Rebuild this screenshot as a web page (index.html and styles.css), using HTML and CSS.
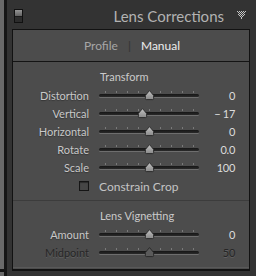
FILE: index.html
```html
<!DOCTYPE html>
<html lang="en">

<head>
    <meta charset="UTF-8">
    <meta name="viewport" content="width=device-width, initial-scale=1.0">
    <title>Lens Corrections</title>
    <link rel="stylesheet" href="styles.css">
</head>

<body>
    <div class="rail"></div>
    <div class="rail-edge"></div>

    <div class="column">
        <header class="panel-head">
            <svg class="toggle" width="9" height="14" viewBox="0 0 9 14">
                <defs>
                    <linearGradient id="toggleTop" x1="0" y1="0" x2="0" y2="1">
                        <stop offset="0" stop-color="#959595" />
                        <stop offset="1" stop-color="#626262" />
                    </linearGradient>
                </defs>
                <rect x="0.5" y="0.5" width="8" height="13" fill="#2c2c2c" stroke="#111" />
                <rect x="1" y="1" width="7" height="6" fill="url(#toggleTop)" />
                <rect x="1" y="7" width="7" height="1" fill="#1a1a1a" />
            </svg>
            <h1 class="panel-title">Lens Corrections</h1>
            <svg class="collapse" width="9" height="8" viewBox="0 0 9 8">
                <g fill="#c4c4c4">
                    <rect x="0" y="0" width="1" height="1" /><rect x="2" y="0" width="1" height="1" />
                    <rect x="4" y="0" width="1" height="1" /><rect x="6" y="0" width="1" height="1" />
                    <rect x="8" y="0" width="1" height="1" />
                    <rect x="1" y="1" width="1" height="1" /><rect x="3" y="1" width="1" height="1" />
                    <rect x="5" y="1" width="1" height="1" /><rect x="7" y="1" width="1" height="1" />
                    <rect x="2" y="2" width="1" height="1" /><rect x="4" y="2" width="1" height="1" />
                    <rect x="6" y="2" width="1" height="1" />
                    <rect x="1" y="3" width="1" height="1" /><rect x="3" y="3" width="1" height="1" />
                    <rect x="5" y="3" width="1" height="1" /><rect x="7" y="3" width="1" height="1" />
                    <rect x="2" y="4" width="1" height="1" /><rect x="4" y="4" width="1" height="1" />
                    <rect x="6" y="4" width="1" height="1" />
                    <rect x="3" y="5" width="1" height="1" /><rect x="5" y="5" width="1" height="1" />
                    <rect x="4" y="6" width="1" height="1" />
                    <rect x="4" y="7" width="1" height="1" />
                </g>
            </svg>
        </header>

        <main class="panel">
            <nav class="tabs">
                <span class="tab">Profile</span>
                <span class="tab-sep">|</span>
                <span class="tab is-active">Manual</span>
            </nav>

            <section class="section">
                <h2 class="section-title">Transform</h2>

                <div class="row">
                    <span class="label">Distortion</span>
                    <div class="slider"><div class="track"></div><div class="thumb" style="left: 45px"></div></div>
                    <span class="value">0</span>
                </div>
                <div class="row">
                    <span class="label">Vertical</span>
                    <div class="slider"><div class="track"></div><div class="thumb" style="left: 38px"></div></div>
                    <span class="value">− 17</span>
                </div>
                <div class="row">
                    <span class="label">Horizontal</span>
                    <div class="slider"><div class="track"></div><div class="thumb" style="left: 45px"></div></div>
                    <span class="value">0</span>
                </div>
                <div class="row">
                    <span class="label">Rotate</span>
                    <div class="slider"><div class="track"></div><div class="thumb" style="left: 45px"></div></div>
                    <span class="value">0.0</span>
                </div>
                <div class="row">
                    <span class="label">Scale</span>
                    <div class="slider"><div class="track"></div><div class="thumb" style="left: 45px"></div></div>
                    <span class="value">100</span>
                </div>

                <label class="check-row">
                    <span class="check-cell"><span class="checkbox"></span></span>
                    <span class="check-text">Constrain Crop</span>
                </label>
            </section>

            <section class="section section-vignette">
                <h2 class="section-title">Lens Vignetting</h2>

                <div class="row">
                    <span class="label">Amount</span>
                    <div class="slider"><div class="track"></div><div class="thumb" style="left: 45px"></div></div>
                    <span class="value">0</span>
                </div>
                <div class="row is-disabled">
                    <span class="label">Midpoint</span>
                    <div class="slider"><div class="track"></div><div class="thumb" style="left: 45px"></div></div>
                    <span class="value">50</span>
                </div>
            </section>
        </main>
    </div>
</body>

</html>
```

FILE: styles.css
```css
/* Reset and Base Styling */
* {
    margin: 0;
    padding: 0;
    box-sizing: border-box;
}

body {
    font-family: Lato, "DejaVu Sans", sans-serif;
    background-color: #333;
    color: #c6c6c6;
    width: 256px;
    height: 276px;
    overflow: hidden;
    display: flex;
}

/* left edge of the neighbouring pane */
.rail {
    width: 4px;
    background: linear-gradient(#6a6a6a 0 269px, #151515 269px 272px, #6a6a6a 272px);
}

.rail-edge {
    width: 3px;
    background: #161616;
}

.column {
    flex: 1;
    display: flex;
    flex-direction: column;
}

/* Panel header */
.panel-head {
    height: 29px;
    display: flex;
    align-items: center;
    padding: 3px 10px 0 7px;
}

.toggle {
    display: block;
}

.panel-title {
    margin-left: auto;
    font-size: 15px;
    font-weight: normal;
    color: #b2b2b2;
}

.collapse {
    display: block;
    margin-left: 13px;
    margin-top: -2px;
}

/* Panel body */
.panel {
    width: 238px;
    margin-left: 5px;
    background: #4c4c4c;
    border: 1px solid #121212;
    border-bottom-width: 2px;
    padding-bottom: 1px;
}

.tabs {
    height: 32px;
    display: flex;
    justify-content: center;
    align-items: center;
    gap: 10px;
    font-size: 12px;
    border-bottom: 1px solid #141414;
    padding-left: 2px;
}

.tab {
    color: #a6a6a6;
}

.tab.is-active {
    color: #ececec;
}

.tab-sep {
    color: #333;
}

.section {
    padding: 6px 0 4px;
}

.section-vignette {
    padding: 6px 0;
    border-top: 1px solid #3c3c3c;
    border-bottom: 1px solid #595959;
}

.section-title {
    height: 18px;
    line-height: 18px;
    padding-left: 87px;
    font-size: 11px;
    font-weight: normal;
    color: #cacaca;
}

.row {
    display: grid;
    grid-template-columns: 86px 100px 36px;
    height: 18px;
    align-items: center;
    font-size: 11px;
}

.label {
    text-align: right;
    padding-right: 10px;
    color: #c8c8c8;
    text-shadow: 0 1px 1px rgba(0, 0, 0, 0.3);
}

.value {
    text-align: right;
    color: #dcdcdc;
    letter-spacing: -0.3px;
}

.slider {
    position: relative;
    height: 18px;
}

/* tick marks above the groove */
.slider::before {
    content: "";
    position: absolute;
    left: 6px;
    top: 5px;
    width: 89px;
    height: 2px;
    background: repeating-linear-gradient(to right, #7a7a7a 0 1px, transparent 1px 11px);
}

.track {
    position: absolute;
    left: 0;
    right: 0;
    top: 8px;
    height: 3px;
    border-radius: 2px;
    background: linear-gradient(#161616, #2a2a2a);
    box-shadow: 0 1px 0 #6e6e6e;
}

.thumb {
    position: absolute;
    top: 4px;
    width: 11px;
    height: 11px;
    background: url("data:image/svg+xml,%3Csvg xmlns='http://www.w3.org/2000/svg' width='11' height='11' viewBox='0 0 11 11'%3E%3Cdefs%3E%3ClinearGradient id='g' x1='0' y1='0' x2='0' y2='1'%3E%3Cstop offset='0' stop-color='%23c4c4c4'/%3E%3Cstop offset='1' stop-color='%23888'/%3E%3C/linearGradient%3E%3C/defs%3E%3Cpath d='M5.5 0.6 L9.6 5.4 L9.6 8.6 Q9.6 9.6 8.6 9.6 L2.4 9.6 Q1.4 9.6 1.4 8.6 L1.4 5.4 Z' fill='url(%23g)' stroke='%23262626' stroke-width='0.9'/%3E%3C/svg%3E") no-repeat;
}

.row.is-disabled .label,
.row.is-disabled .value {
    color: #262626;
    text-shadow: 0 1px 0 rgba(255, 255, 255, 0.12);
}

.row.is-disabled .thumb {
    background: url("data:image/svg+xml,%3Csvg xmlns='http://www.w3.org/2000/svg' width='11' height='11' viewBox='0 0 11 11'%3E%3Cpath d='M5.5 0.6 L9.6 5.4 L9.6 8.6 Q9.6 9.6 8.6 9.6 L2.4 9.6 Q1.4 9.6 1.4 8.6 L1.4 5.4 Z' fill='%235a5a5a' stroke='%23262626' stroke-width='0.9'/%3E%3C/svg%3E") no-repeat;
}

.check-row {
    display: grid;
    grid-template-columns: 86px 150px;
    height: 20px;
    align-items: center;
    font-size: 11px;
}

.check-cell {
    display: flex;
    justify-content: flex-end;
    padding-right: 10px;
}

.checkbox {
    width: 10px;
    height: 10px;
    border: 1px solid #151515;
    background: #464646;
    box-shadow: inset 0 1px 1px rgba(0, 0, 0, 0.4);
}

.check-text {
    color: #c4c4c4;
    font-size: 12px;
}
```
